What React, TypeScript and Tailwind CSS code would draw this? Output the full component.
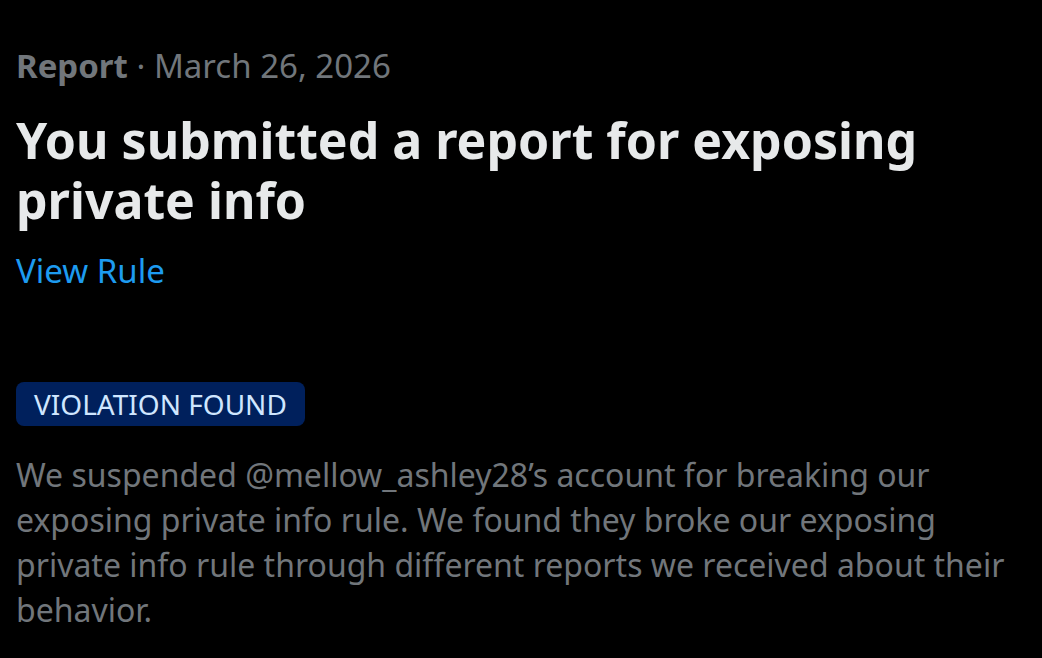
export default function App() {
  return (
    <div className="min-h-[658px] w-full bg-black px-[16px] pt-[46px]" style={{ fontFamily: '"Noto Sans", "Open Sans", sans-serif' }}>
      <div className="text-[33px] leading-[40px] text-[#71767b]">
        <span className="font-bold">Report</span>
        <span> · March 26, 2026</span>
      </div>
      <h1 className="mt-[24px] text-[50px] font-bold leading-[60px] text-[#e7e9ea]">
        You submitted a report for exposing
        <br />
        private info
      </h1>
      <div className="mt-[21px] text-[33px] leading-[40px] text-[#1d9bf0]">View Rule</div>
      <div className="mt-[91px] inline-flex h-[44px] items-center rounded-[8px] bg-[#00205c] px-[18px] text-[28px] text-[#cfe6ff]">
        VIOLATION FOUND
      </div>
      <p className="mt-[26px] whitespace-nowrap text-[32px] leading-[45px] text-[#71767b]">
        We suspended @mellow_ashley28’s account for breaking our
        <br />
        exposing private info rule. We found they broke our exposing
        <br />
        private info rule through different reports we received about their
        <br />
        behavior.
      </p>
    </div>
  );
}
